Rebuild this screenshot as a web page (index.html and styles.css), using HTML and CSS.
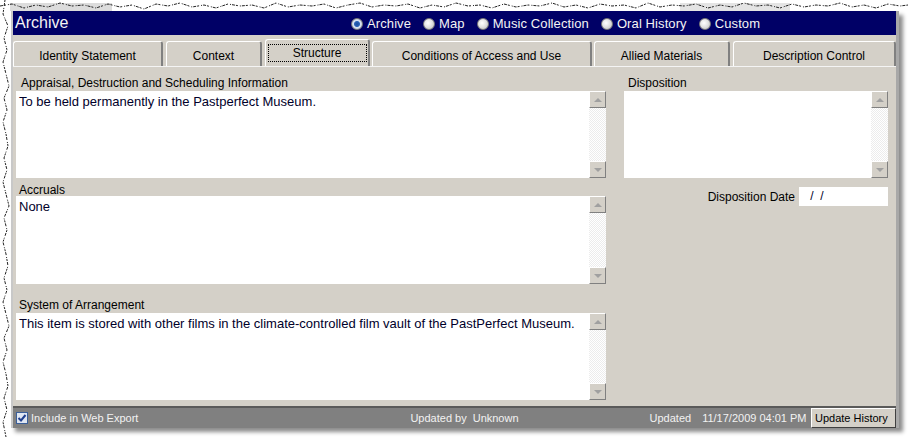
FILE: index.html
```html
<!DOCTYPE html>
<html>
<head>
<meta charset="utf-8">
<link rel="stylesheet" href="styles.css">
</head>
<body>
<svg class="torn" width="908" height="437" viewBox="0 0 908 437">
  <rect x="10" y="3" width="102" height="8" fill="#dcdcdc"/>
  <rect x="680" y="3" width="110" height="8" fill="#e4e4e4"/>
  <polyline fill="none" stroke="#222" stroke-width="1" stroke-dasharray="3 1 2 2 1 1" points="0,6 12,4 24,8 36,5 48,7 60,3 72,6 84,5 96,8 108,4 120,7 132,5 144,9 156,4 168,6 180,3 192,7 204,5 216,8 228,4 240,6 252,5 264,8 276,3 288,7 300,5 312,6 324,4 336,8 348,5 360,3 372,7 384,5 396,6 408,4 420,8 432,5 444,7 456,3 468,6 480,5 492,8 504,4 516,7 528,5 540,6 552,3 564,7 576,5 588,8 600,4 612,6 624,5 636,8 648,3 660,7 672,5 684,6 696,4 708,8 720,5 732,7 744,3 756,6 768,5 780,8 792,4 804,7 816,5 828,6 840,3 852,7 864,5 876,8 888,4 900,6 908,5"/>
  <polyline fill="none" stroke="#222" stroke-width="1" stroke-dasharray="2 1 3 2 1 1" points="5,0 3,14 8,26 4,38 7,50 3,62 6,74 9,86 4,98 7,110 3,122 6,134 8,146 4,158 7,170 3,182 6,194 9,206 4,218 7,230 3,242 6,254 8,266 4,278 7,290 3,302 6,314 9,326 4,338 7,350 3,362 6,374 8,386 4,398 7,410 3,422 6,437"/>
</svg>

<div class="window">
  <div class="titlebar">
    <span class="title">Archive</span>
    <div class="radios">
      <span class="radio-item"><span class="radio on"></span>Archive</span>
      <span class="radio-item"><span class="radio"></span>Map</span>
      <span class="radio-item"><span class="radio"></span>Music Collection</span>
      <span class="radio-item"><span class="radio"></span>Oral History</span>
      <span class="radio-item"><span class="radio"></span>Custom</span>
    </div>
  </div>

  <div class="tabs">
    <div class="tab t1">Identity Statement</div>
    <div class="tab t2">Context</div>
    <div class="tab t3 active"><span class="focus">Structure</span></div>
    <div class="tab t4">Conditions of Access and Use</div>
    <div class="tab t5">Allied Materials</div>
    <div class="tab t6">Description Control</div>
  </div>

  <div class="content">
    <div class="col left">
      <div class="label lab1">Appraisal, Destruction and Scheduling Information</div>
      <div class="memo h87">
        <div class="memo-text">To be held permanently in the Pastperfect Museum.</div>
        <div class="sb"><div class="sbtn up"></div><div class="track"></div><div class="sbtn down"></div></div>
      </div>
      <div class="label lab2">Accruals</div>
      <div class="memo h88">
        <div class="memo-text">None</div>
        <div class="sb"><div class="sbtn up"></div><div class="track"></div><div class="sbtn down"></div></div>
      </div>
      <div class="label lab3">System of Arrangement</div>
      <div class="memo h87">
        <div class="memo-text">This item is stored with other films in the climate-controlled film vault of the PastPerfect Museum.</div>
        <div class="sb"><div class="sbtn up"></div><div class="track"></div><div class="sbtn down"></div></div>
      </div>
    </div>
    <div class="col right">
      <div class="label lab1 rl">Disposition</div>
      <div class="memo h87">
        <div class="memo-text"></div>
        <div class="sb"><div class="sbtn up"></div><div class="track"></div><div class="sbtn down"></div></div>
      </div>
      <div class="date-row">
        <span class="date-label">Disposition Date</span>
        <span class="date-input">&nbsp;/&nbsp;&nbsp;/</span>
      </div>
    </div>
  </div>

  <div class="statusbar">
    <span class="check"><svg width="12" height="12" viewBox="0 0 12 12"><rect x="0.5" y="0.5" width="11" height="11" fill="#dfe6f2" stroke="#3b5f9a"/><path d="M2.5 6 L5 8.5 L9.5 3" fill="none" stroke="#1f3f8f" stroke-width="2"/></svg></span>
    <span class="st-text">Include in Web Export</span>
    <span class="st-text upby">Updated by</span>
    <span class="st-text unk">Unknown</span>
    <span class="st-text upd">Updated</span>
    <span class="st-text dt">11/17/2009 04:01 PM</span>
    <span class="btn">Update History</span>
  </div>
</div>
</body>
</html>
```

FILE: styles.css
```css
* { box-sizing: border-box; }
body {
  margin: 0;
  background: #fff;
  width: 908px;
  height: 437px;
  overflow: hidden;
  font-family: "Liberation Sans", Arial, sans-serif;
  position: relative;
}
.torn {
  position: absolute;
  left: 0;
  top: 0;
  pointer-events: none;
}
.window {
  position: relative;
  margin: 11px 0 0 11px;
  width: 888px;
  background: #d4d0c8;
  border-left: 2px solid #c8c8c8;
  border-right: 3px solid #a8a8a8;
  box-shadow: 4px 4px 4px rgba(0,0,0,0.45);
}
.titlebar {
  height: 24px;
  background: #000066;
  display: flex;
  align-items: center;
  padding-left: 2px;
  color: #f4f4f4;
}
.title {
  font-size: 16px;
  width: 336px;
}
.radios {
  display: flex;
  align-items: center;
  font-size: 13px;
  padding-top: 1px;
}
.radio-item {
  display: flex;
  align-items: center;
  margin-right: 12px;
  letter-spacing: 0.1px;
}
.radio {
  display: inline-block;
  width: 12px;
  height: 12px;
  border-radius: 50%;
  border: 1px solid #7a7a7a;
  background: radial-gradient(circle at 40% 40%, #ffffff 0, #e4e4e4 45%, #b8b8b8 100%);
  margin-right: 4px;
}
.radio.on {
  background: radial-gradient(circle, #1c4f9c 0, #2a64b8 2.5px, #d8e4f3 3.5px, #b0bccc 100%);
}
.tabs {
  height: 32px;
  display: flex;
  align-items: flex-end;
  padding-left: 0;
  border-bottom: 1px solid #f4f4f4;
}
.tab {
  height: 25px;
  background: #d4d0c8;
  border-top: 1px solid #fff;
  border-left: 1px solid #fff;
  border-right: 2px solid #808080;
  border-top-left-radius: 3px;
  border-top-right-radius: 3px;
  font-size: 12px;
  color: #000;
  display: flex;
  align-items: center;
  justify-content: center;
  padding-top: 4px;
}
.t1 { width: 150px; margin-left: 0; }
.t2 { width: 96px; margin-left: 3px; }
.t3 { width: 105px; margin-left: 3px; }
.t4 { width: 220px; margin-left: 2px; }
.t5 { width: 136px; margin-left: 2px; }
.t6 { width: 163px; margin-left: 3px; }
.tab.active {
  height: 27px;
  padding-top: 0;
  align-items: flex-start;
}
.focus {
  margin-top: 4px;
  width: 99px;
  height: 18px;
  border: 1px dotted #000;
  display: flex;
  justify-content: center;
  align-items: center;
}
.content {
  display: flex;
  padding: 7px 0 6px 3px;
}
.col.left { width: 590px; }
.col.right { width: 264px; margin-left: 18px; }
.label {
  font-size: 12px;
  color: #000;
  display: flex;
  align-items: center;
  padding-left: 3px;
}
.lab1 { height: 17px; padding-left: 5px; }
.lab2 { height: 18px; padding-top: 5px; }
.lab3 { height: 29px; padding-top: 12px; }
.rl { padding-left: 4px; }
.memo {
  background: #fff;
  display: flex;
}
.h87 { height: 87px; }
.h88 { height: 88px; }
.memo-text {
  flex: 1;
  font-size: 13px;
  color: #00002a;
  padding: 3px 3px;
  line-height: 16px;
}
.sb {
  width: 17px;
  display: flex;
  flex-direction: column;
}
.sbtn {
  height: 17px;
  background: #d4d0c8;
  border-top: 1px solid #fff;
  border-left: 1px solid #fff;
  border-right: 1px solid #808080;
  border-bottom: 1px solid #808080;
  display: flex;
  align-items: center;
  justify-content: center;
}
.sbtn::after {
  content: "";
  width: 0;
  height: 0;
  border-left: 4px solid transparent;
  border-right: 4px solid transparent;
}
.sbtn.up::after { border-bottom: 4px solid #a0a0a0; }
.sbtn.down::after { border-top: 4px solid #a0a0a0; }
.track {
  flex: 1;
  background-color: #fff;
  background-image: repeating-conic-gradient(#ececec 0 25%, #fff 0 50%);
  background-size: 2px 2px;
}
.date-row {
  display: flex;
  justify-content: flex-end;
  align-items: center;
  margin-top: 9px;
  height: 19px;
}
.date-label {
  font-size: 12px;
  color: #000;
  margin-right: 4px;
}
.date-input {
  width: 89px;
  height: 19px;
  background: #fff;
  font-size: 12px;
  color: #00002a;
  padding-left: 8px;
  line-height: 19px;
}
.statusbar {
  height: 22px;
  border-top: 2px solid #5a5a5a;
  background: #808080;
  display: flex;
  align-items: center;
  font-size: 11px;
  color: #f2f2f2;
  padding-left: 3px;
}
.check { display: flex; margin-right: 3px; }
.st-text { white-space: nowrap; }
.upby { margin-left: 272px; }
.unk { margin-left: 6px; }
.upd { margin-left: 131px; }
.dt { margin-left: 11px; }
.btn {
  margin-left: auto;
  width: 85px;
  height: 20px;
  background: #d4d0c8;
  color: #000;
  border-top: 1px solid #fff;
  border-left: 1px solid #fff;
  border-right: 1px solid #404040;
  border-bottom: 1px solid #404040;
  display: flex;
  align-items: center;
  padding-left: 3px;
}
```
